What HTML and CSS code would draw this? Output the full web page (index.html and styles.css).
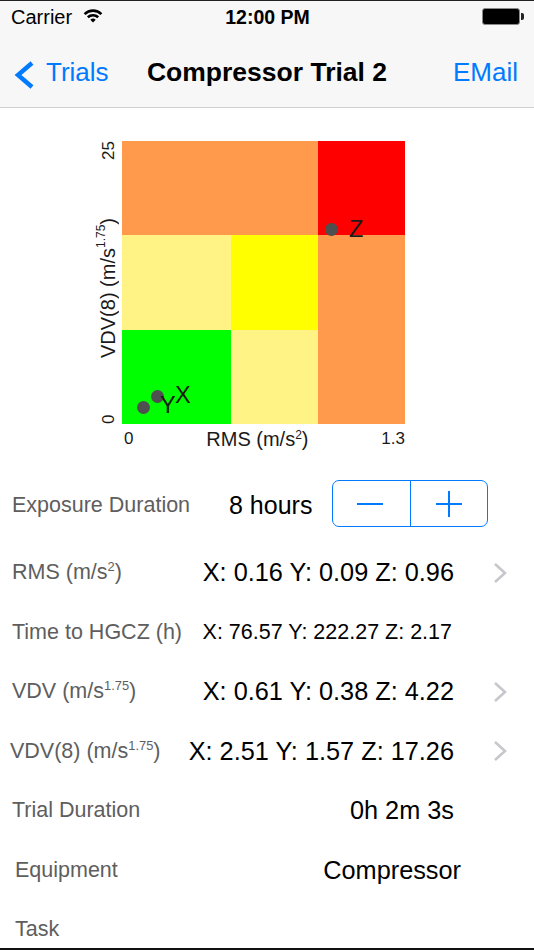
FILE: index.html
```html
<!DOCTYPE html>
<html lang="en">
<head>
    <meta charset="UTF-8">
    <meta name="viewport" content="width=device-width, initial-scale=1.0">
    <title>Compressor Trial 2</title>
    <link rel="stylesheet" href="styles.css">
</head>
<body>
    <div class="screen">
        <div class="topbar">
            <div class="status">
                <div class="status-left">
                    <span>Carrier</span>
                    <svg class="wifi" width="20" height="15" viewBox="0 0 20 15">
                        <path d="M1.6 6.1 A12 12 0 0 1 18.4 6.1" fill="none" stroke="#000" stroke-width="2.6"/>
                        <path d="M4.8 9.3 A7.5 7.5 0 0 1 15.2 9.3" fill="none" stroke="#000" stroke-width="2.6"/>
                        <path d="M10 14.5 L7.3 11.8 A3.8 3.8 0 0 1 12.7 11.8 Z" fill="#000"/>
                    </svg>
                </div>
                <div class="status-time">12:00 PM</div>
                <div class="status-right">
                    <span class="battery"></span><span class="battery-nub"></span>
                </div>
            </div>
            <div class="navbar">
                <a class="nav-back">
                    <svg width="24" height="28" viewBox="0 0 24 28">
                        <path d="M20 2 L6 14 L20 26" fill="none" stroke="#007AFF" stroke-width="4.4"/>
                    </svg>
                    <span>Trials</span>
                </a>
                <div class="nav-title">Compressor Trial 2</div>
                <a class="nav-action">EMail</a>
            </div>
        </div>

        <div class="chart">
            <div class="y-axis">
                <span class="tick">0</span>
                <span class="axis-title">VDV(8) (m/s<span class="sup">1.75</span>)</span>
                <span class="tick">25</span>
            </div>
            <div class="plot">
                <div class="cell orange"></div>
                <div class="cell orange"></div>
                <div class="cell red"></div>
                <div class="cell pale"></div>
                <div class="cell yellow"></div>
                <div class="cell orange"></div>
                <div class="cell green"></div>
                <div class="cell pale"></div>
                <div class="cell orange"></div>

                <span class="dot" style="left: 209px; top: 88px;"></span>
                <span class="dot" style="left: 35px; top: 255px;"></span>
                <span class="dot" style="left: 21px; top: 266px;"></span>
                <span class="point-label" style="left: 227px; top: 77px;">Z</span>
                <span class="point-label" style="left: 53px; top: 243px;">X</span>
                <span class="point-label" style="left: 38px; top: 253px;">Y</span>
            </div>
            <div></div>
            <div class="x-axis">
                <span class="tick">0</span>
                <span class="axis-title">RMS (m/s<span class="sup">2</span>)</span>
                <span class="tick">1.3</span>
            </div>
        </div>

        <div class="exposure">
            <span class="label exposure-label">Exposure Duration</span>
            <span class="exposure-value">8 hours</span>
            <div class="stepper">
                <button class="step-btn"><span class="minus"></span></button>
                <button class="step-btn"><span class="plus"></span></button>
            </div>
        </div>

        <div class="rows">
            <div class="row">
                <span class="label">RMS (m/s<span class="sup">2</span>)</span>
                <span class="value">X: 0.16 Y: 0.09 Z: 0.96</span>
                <span class="more"><svg width="14" height="22" viewBox="0 0 14 22"><path d="M2 2 L12 11 L2 20" fill="none" stroke="#C7C7CC" stroke-width="2.6"/></svg></span>
            </div>
            <div class="row">
                <span class="label">Time to HGCZ (h)</span>
                <span class="value small">X: 76.57 Y: 222.27 Z: 2.17</span>
                <span class="more"></span>
            </div>
            <div class="row">
                <span class="label">VDV (m/s<span class="sup">1.75</span>)</span>
                <span class="value">X: 0.61 Y: 0.38 Z: 4.22</span>
                <span class="more"><svg width="14" height="22" viewBox="0 0 14 22"><path d="M2 2 L12 11 L2 20" fill="none" stroke="#C7C7CC" stroke-width="2.6"/></svg></span>
            </div>
            <div class="row">
                <span class="label tight">VDV(8) (m/s<span class="sup">1.75</span>)</span>
                <span class="value">X: 2.51 Y: 1.57 Z: 17.26</span>
                <span class="more"><svg width="14" height="22" viewBox="0 0 14 22"><path d="M2 2 L12 11 L2 20" fill="none" stroke="#C7C7CC" stroke-width="2.6"/></svg></span>
            </div>
            <div class="row">
                <span class="label">Trial Duration</span>
                <span class="value">0h 2m 3s</span>
                <span class="more"></span>
            </div>
            <div class="row">
                <span class="label indent">Equipment</span>
                <span class="value wide">Compressor</span>
                <span class="more"></span>
            </div>
            <div class="row">
                <span class="label indent">Task</span>
                <span class="value"></span>
                <span class="more"></span>
            </div>
        </div>
    </div>
</body>
</html>
```

FILE: styles.css
```css
* {
    box-sizing: border-box;
}
body {
    margin: 0;
    padding: 0;
    font-family: 'Liberation Sans', Arial, sans-serif;
    background-color: #fff;
    color: #000;
}
.screen {
    width: 534px;
    height: 950px;
    border-top: 1px solid #222;
    border-bottom: 2px solid #111;
    overflow: hidden;
    display: flex;
    flex-direction: column;
}
.screen > * {
    flex-shrink: 0;
}

/* status + nav */
.topbar {
    background-color: #f7f7f7;
    border-bottom: 1px solid #cfcfcf;
}
.status {
    height: 32px;
    display: grid;
    grid-template-columns: 1fr auto 1fr;
    align-items: center;
    font-size: 20px;
}
.status-left {
    display: flex;
    align-items: center;
    padding-left: 11px;
    gap: 11px;
}
.wifi {
    margin-top: -3px;
}
.status-time {
    font-weight: bold;
    font-size: 19.5px;
    padding-left: 1px;
}
.status-right {
    display: flex;
    justify-content: flex-end;
    align-items: center;
    padding-right: 10px;
}
.battery {
    width: 38px;
    height: 17px;
    background-color: #000;
    border: 1px solid #8a8a8a;
    border-radius: 3px;
    margin-top: -1px;
}
.battery-nub {
    width: 3px;
    height: 7px;
    background-color: #222;
    border-radius: 0 2px 2px 0;
    margin-left: 1px;
    margin-top: -1px;
}
.navbar {
    height: 74px;
    display: grid;
    grid-template-columns: 1fr auto 1fr;
    align-items: center;
    font-size: 26px;
    padding-top: 5px;
}
.nav-back {
    display: flex;
    align-items: center;
    color: #007AFF;
    padding-left: 12px;
    gap: 10px;
}
.nav-back svg {
    margin-top: 5px;
}
.nav-title {
    font-weight: bold;
    font-size: 26.5px;
}
.nav-action {
    color: #007AFF;
    text-align: right;
    padding-right: 16px;
}

/* chart */
.chart {
    display: grid;
    grid-template-columns: 26px 283px;
    grid-template-rows: 283px 28px;
    margin: 33px 0 0 96px;
    color: #1a1a1a;
}
.y-axis {
    writing-mode: vertical-rl;
    transform: rotate(180deg);
    display: flex;
    justify-content: space-between;
    align-items: center;
    padding: 0 0 0 1px;
}
.x-axis {
    display: flex;
    justify-content: space-between;
    align-items: center;
    padding: 2px 0 0 2px;
}
.tick {
    font-size: 17px;
}
.axis-title {
    font-size: 20px;
}
.y-axis .axis-title {
    padding-bottom: 2px;
}
.plot {
    position: relative;
    display: grid;
    grid-template-columns: 109px 87px 87px;
    grid-template-rows: 94px 95px 94px;
}
.orange {
    background-color: #ff9a4c;
}
.red {
    background-color: #ff0000;
}
.pale {
    background-color: #fff385;
}
.yellow {
    background-color: #ffff00;
}
.green {
    background-color: #00ff00;
}
.dot {
    position: absolute;
    width: 13px;
    height: 13px;
    margin: -6.5px 0 0 -6.5px;
    border-radius: 50%;
    background-color: #4f4f4f;
}
.point-label {
    position: absolute;
    font-size: 23.5px;
    line-height: 1;
    color: #1a1a1a;
}

/* detail rows */
.exposure {
    height: 64px;
    margin-top: 21px;
    display: flex;
    align-items: center;
}
.label {
    font-size: 21.5px;
    color: #5e5e5e;
    padding-left: 12px;
    white-space: nowrap;
}
.exposure-label {
    width: 229px;
}
.exposure-value {
    width: 103px;
    font-size: 25px;
}
.stepper {
    display: flex;
    width: 156px;
    height: 47px;
    border: 1.5px solid #007AFF;
    border-radius: 7px;
    margin-top: -3px;
}
.step-btn {
    flex: 1;
    background: none;
    border: none;
    padding: 0;
    display: flex;
    align-items: center;
    justify-content: center;
    position: relative;
}
.step-btn + .step-btn {
    border-left: 1.5px solid #007AFF;
}
.minus {
    width: 26px;
    height: 2px;
    background-color: #007AFF;
    margin-left: -2px;
}
.plus {
    position: relative;
    width: 26px;
    height: 26px;
}
.plus::before,
.plus::after {
    content: "";
    position: absolute;
    background-color: #007AFF;
}
.plus::before {
    left: 0;
    top: 12px;
    width: 26px;
    height: 2px;
}
.plus::after {
    left: 12px;
    top: 0;
    width: 2px;
    height: 26px;
}
.rows {
    margin-top: 6px;
}
.row {
    height: 59.5px;
    display: flex;
    align-items: center;
}
.label.tight {
    padding-left: 10px;
}
.label.indent {
    padding-left: 15px;
}
.value {
    margin-left: auto;
    font-size: 25.3px;
    white-space: nowrap;
}
.value.small {
    font-size: 21.5px;
    margin-right: 2px;
}
.value.wide {
    margin-right: -7px;
}
.more {
    width: 80px;
    padding-left: 39px;
    display: flex;
    align-items: center;
}
.sup {
    font-size: 0.6em;
    vertical-align: 0.6em;
    line-height: 0;
}
```
